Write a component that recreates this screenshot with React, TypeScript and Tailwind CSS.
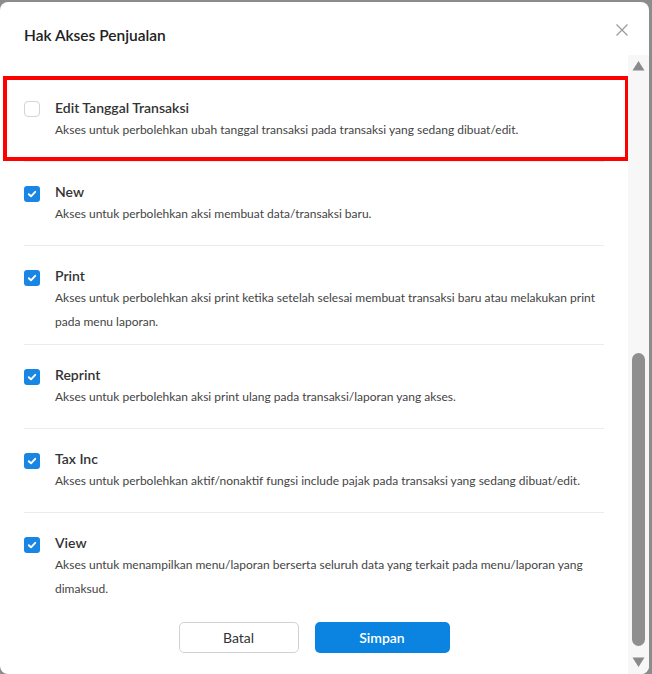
import { useLayoutEffect, useRef } from "react";

type Access = {
  name: string;
  desc: string;
  checked: boolean;
  marked?: boolean;
};

const items: Access[] = [
  { name: "Delete", desc: "Akses untuk perbolehkan aksi menghapus data/transaksi yang sudah dibuat.", checked: true },
  { name: "Edit", desc: "Akses untuk perbolehkan aksi ubah data pada transaksi yang sudah disimpan sebelumnya.", checked: true },
  {
    name: "Edit Tanggal Transaksi",
    desc: "Akses untuk perbolehkan ubah tanggal transaksi pada transaksi yang sedang dibuat/edit.",
    checked: false,
    marked: true,
  },
  { name: "New", desc: "Akses untuk perbolehkan aksi membuat data/transaksi baru.", checked: true },
  {
    name: "Print",
    desc: "Akses untuk perbolehkan aksi print ketika setelah selesai membuat transaksi baru atau melakukan print pada menu laporan.",
    checked: true,
  },
  { name: "Reprint", desc: "Akses untuk perbolehkan aksi print ulang pada transaksi/laporan yang akses.", checked: true },
  {
    name: "Tax Inc",
    desc: "Akses untuk perbolehkan aktif/nonaktif fungsi include pajak pada transaksi yang sedang dibuat/edit.",
    checked: true,
  },
  {
    name: "View",
    desc: "Akses untuk menampilkan menu/laporan berserta seluruh data yang terkait pada menu/laporan yang dimaksud.",
    checked: true,
  },
];

function Checkbox({ checked }: { checked: boolean }) {
  if (!checked) {
    return <span className="mt-[3px] block h-4 w-4 shrink-0 rounded-[4px] border border-[#d4d4d4] bg-white" />;
  }
  return (
    <span className="mt-[4px] flex h-4 w-4 shrink-0 items-center justify-center rounded-[3px] bg-[#1a86e4]">
      <svg width="10" height="10" viewBox="0 0 10 10" fill="none">
        <path d="M1.8 5.2 4 7.3 8.2 2.8" stroke="white" strokeWidth="1.9" strokeLinecap="round" strokeLinejoin="round" />
      </svg>
    </span>
  );
}

function AccessRow({ item, last }: { item: Access; last: boolean }) {
  return (
    <div
      className={`relative flex min-h-[84px] gap-[15px] pt-5 pb-[10px] ${last ? "" : "border-b border-[#ececec]"}`}
    >
      {item.marked && (
        <div className="pointer-events-none absolute -top-[2px] -right-[25px] bottom-0 -left-[21px] border-4 border-[#ff0000]" />
      )}
      <Checkbox checked={item.checked} />
      <div className="min-w-0">
        <div className="text-[14px] leading-5 font-semibold text-[#333]">{item.name}</div>
        <p className="text-[12px] leading-6 text-[#444]">{item.desc}</p>
      </div>
    </div>
  );
}

export default function App() {
  const listRef = useRef<HTMLDivElement>(null);

  useLayoutEffect(() => {
    const el = listRef.current;
    if (el) el.scrollTop = el.scrollHeight;
  }, []);

  return (
    <div className="h-screen bg-[#8c8c8c] pt-[2px] pr-[3px] font-['Lato',sans-serif]">
      <div className="flex h-full w-[649px] flex-col overflow-hidden rounded-lg bg-white">
        <div className="flex h-[51px] shrink-0 items-start justify-between pt-[23px] pr-[21px] pl-6">
          <h1 className="text-[15.5px] leading-5 font-semibold text-[#222]">Hak Akses Penjualan</h1>
          <svg width="12" height="12" viewBox="0 0 12 12" className="-mt-[1px]">
            <path d="M0.5 0.5l11 11M11.5 0.5l-11 11" stroke="#9a9a9a" strokeWidth="1.2" />
          </svg>
        </div>

        <div className="flex min-h-0 flex-1">
          <div ref={listRef} className="flex-1 overflow-y-auto px-6 [scrollbar-width:none]">
            {items.map((item, i) => (
              <AccessRow key={item.name} item={item} last={i === items.length - 1} />
            ))}
            <div className="flex justify-center gap-4 pt-[11px] pb-[21px]">
              <button className="h-[31px] w-[120px] rounded-[5px] border border-[#d2d2d2] bg-white text-[14px] text-[#333]">
                Batal
              </button>
              <button className="h-[31px] w-[135px] rounded-[5px] bg-[#0a84e0] text-[14px] font-semibold text-white">
                Simpan
              </button>
            </div>
          </div>

          <div className="mt-[2px] flex w-[21px] shrink-0 flex-col items-center bg-[#f7f7f7] pt-[5px] pb-[6px]">
            <svg width="13" height="11" viewBox="0 0 13 11">
              <path d="M6.5 1 12.5 10.5H0.5Z" fill="#8a8a8a" />
            </svg>
            <div className="flex flex-1 flex-col justify-end pb-[11px]">
              <div className="h-[293px] w-[13px] rounded-full bg-[#8f8f8f]" />
            </div>
            <svg width="13" height="11" viewBox="0 0 13 11">
              <path d="M0.5 0.5H12.5L6.5 10Z" fill="#8a8a8a" />
            </svg>
          </div>
        </div>
      </div>
    </div>
  );
}
